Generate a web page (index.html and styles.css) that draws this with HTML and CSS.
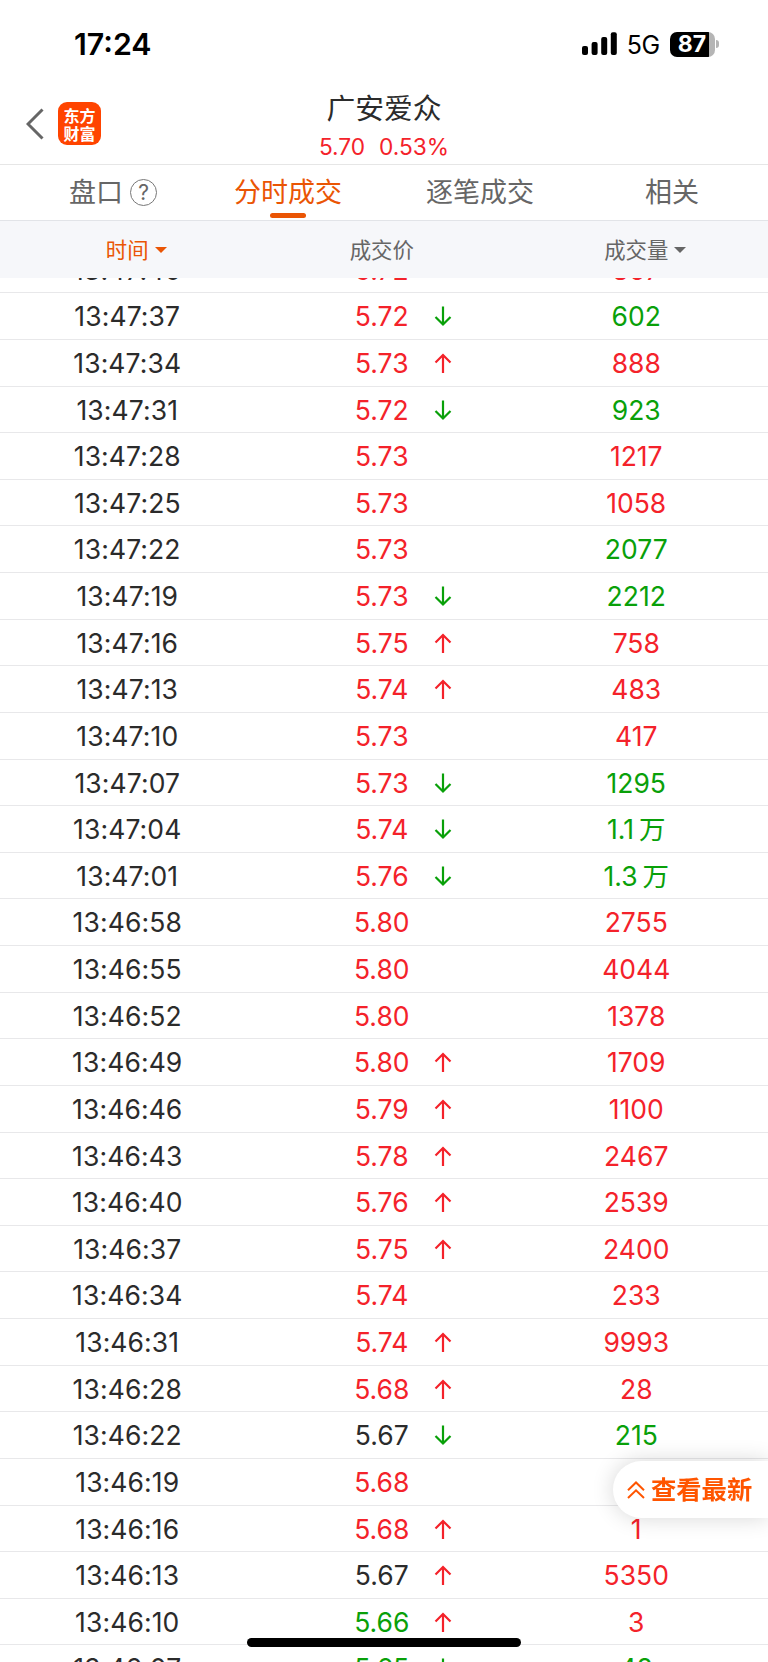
FILE: index.html
```html
<!DOCTYPE html>
<html lang="zh-CN">
<head>
  <meta charset="UTF-8" />
  <meta name="viewport" content="width=device-width, initial-scale=1.0"/>
  <title>广安爱众 - 分时成交</title>
  <link rel="stylesheet" href="styles.css">
</head>

<body>
  <div class="status-bar">
    <span class="status-time">17:24</span>
    <div class="status-icons">
      <svg class="signal" width="36" height="24" viewBox="0 0 36 24">
        <rect x="0" y="14" width="6" height="9" rx="2"/>
        <rect x="9.6" y="10" width="6" height="13" rx="2"/>
        <rect x="19.2" y="5" width="6" height="18" rx="2"/>
        <rect x="28.8" y="0.3" width="6" height="22.7" rx="2"/>
      </svg>
      <span class="network">5G</span>
      <div class="battery"><span>87</span></div>
      <div class="battery-cap"></div>
    </div>
  </div>

  <header class="header">
    <div class="header-left">
      <svg class="back" width="18" height="32" viewBox="0 0 18 32">
        <path d="M16.5 1.5 L2 16 L16.5 30.5" fill="none" stroke="#666" stroke-width="3"/>
      </svg>
      <div class="logo">东方<br>财富</div>
    </div>
    <div class="header-title">
      <h1>广安爱众</h1>
      <p><span>5.70</span><span>0.53%</span></p>
    </div>
  </header>

  <nav class="tabs">
    <a class="tab">盘口<i class="help">?</i></a>
    <a class="tab active">分时成交</a>
    <a class="tab">逐笔成交</a>
    <a class="tab">相关</a>
  </nav>

  <div class="columns">
    <span class="sorted">时间<i class="caret"></i></span>
    <span>成交价</span>
    <span>成交量<i class="caret"></i></span>
  </div>

  <main class="list">
    <div id="rows"></div>
  </main>

  <button type="button" class="latest">
    <svg width="18" height="18" viewBox="0 0 18 18">
      <path d="M1 9.2 L9 1.5 L17 9.2 M1 17 L9 9.3 L17 17" fill="none" stroke="#ff5500" stroke-width="2"/>
    </svg>
    <span>查看最新</span>
  </button>
  <div class="home-indicator"></div>

  <script>
    // hora, precio, color del precio, flecha, volumen, color del volumen
    const datos = [
      ["13:47:40", "5.72", "red", "", "867", "red"],
      ["13:47:37", "5.72", "red", "down", "602", "green"],
      ["13:47:34", "5.73", "red", "up", "888", "red"],
      ["13:47:31", "5.72", "red", "down", "923", "green"],
      ["13:47:28", "5.73", "red", "", "1217", "red"],
      ["13:47:25", "5.73", "red", "", "1058", "red"],
      ["13:47:22", "5.73", "red", "", "2077", "green"],
      ["13:47:19", "5.73", "red", "down", "2212", "green"],
      ["13:47:16", "5.75", "red", "up", "758", "red"],
      ["13:47:13", "5.74", "red", "up", "483", "red"],
      ["13:47:10", "5.73", "red", "", "417", "red"],
      ["13:47:07", "5.73", "red", "down", "1295", "green"],
      ["13:47:04", "5.74", "red", "down", "1.1万", "green"],
      ["13:47:01", "5.76", "red", "down", "1.3万", "green"],
      ["13:46:58", "5.80", "red", "", "2755", "red"],
      ["13:46:55", "5.80", "red", "", "4044", "red"],
      ["13:46:52", "5.80", "red", "", "1378", "red"],
      ["13:46:49", "5.80", "red", "up", "1709", "red"],
      ["13:46:46", "5.79", "red", "up", "1100", "red"],
      ["13:46:43", "5.78", "red", "up", "2467", "red"],
      ["13:46:40", "5.76", "red", "up", "2539", "red"],
      ["13:46:37", "5.75", "red", "up", "2400", "red"],
      ["13:46:34", "5.74", "red", "", "233", "red"],
      ["13:46:31", "5.74", "red", "up", "9993", "red"],
      ["13:46:28", "5.68", "red", "up", "28", "red"],
      ["13:46:22", "5.67", "", "down", "215", "green"],
      ["13:46:19", "5.68", "red", "", "", "red"],
      ["13:46:16", "5.68", "red", "up", "1", "red"],
      ["13:46:13", "5.67", "", "up", "5350", "red"],
      ["13:46:10", "5.66", "green", "up", "3", "red"],
      ["13:46:07", "5.65", "green", "down", "48", "green"]
    ];

    const flechas = {
      up: "M9 20 V2 M1.5 9.5 L9 2 L16.5 9.5",
      down: "M9 0.5 V18.5 M1.5 11 L9 18.5 L16.5 11"
    };

    function flecha(tipo) {
      if (!tipo) return "";
      return `<svg class="arrow ${tipo}" width="18" height="21" viewBox="0 0 18 21"><path d="${flechas[tipo]}"/></svg>`;
    }

    document.getElementById("rows").innerHTML = datos.map(([hora, precio, colorPrecio, tipo, volumen, colorVolumen]) => `
      <div class="row">
        <span class="time">${hora}</span>
        <span class="price ${colorPrecio}">${precio}${flecha(tipo)}</span>
        <span class="volume ${colorVolumen}">${volumen.replace("万", "<b>万</b>")}</span>
      </div>`).join("");
  </script>
</body>
</html>
```
FILE: styles.css
```css
* {
  box-sizing: border-box;
}

body {
  margin: 0;
  height: 1662px;
  overflow: hidden;
  display: flex;
  flex-direction: column;
  background: #fff;
  color: #2b2b2b;
  font-family: Inter, "Noto Sans CJK SC", sans-serif;
}

/* Status bar */
.status-bar {
  height: 88px;
  flex: none;
  display: flex;
  justify-content: space-between;
  align-items: center;
  padding: 0 49px 0 74px;
  color: #000;
}

.status-time {
  font-size: 30.3px;
  font-weight: 600;
}

.status-icons {
  display: flex;
  align-items: center;
}

.network {
  margin: 1px 10px 0 9px;
  font-size: 25px;
  letter-spacing: -0.6px;
}

.battery {
  width: 45px;
  height: 25px;
  border-radius: 7px;
  background: linear-gradient(to right, #000 39px, #b5b5b5 39px);
  color: #fff;
  font-size: 23px;
  font-weight: 700;
  line-height: 25px;
  text-align: center;
}

.battery-cap {
  width: 3px;
  height: 8px;
  margin-left: 1.5px;
  border-radius: 0 3px 3px 0;
  background: #b5b5b5;
}

/* Header */
.header {
  height: 77px;
  flex: none;
  display: grid;
  grid-template-columns: 200px 1fr 200px;
  border-bottom: 1px solid #e6e6e6;
}

.header-left {
  display: flex;
  align-items: center;
  gap: 14px;
  height: 71px;
  padding-left: 26px;
}

.logo {
  width: 43px;
  height: 43px;
  padding-top: 4px;
  border-radius: 9px;
  background: #ff4400;
  color: #fff;
  font-family: "Noto Sans CJK SC", sans-serif;
  font-size: 16px;
  font-weight: 700;
  line-height: 18px;
  text-align: center;
}

.header-title {
  text-align: center;
}

.header-title h1 {
  margin: 0;
  font-size: 28.8px;
  font-weight: 400;
  line-height: 42px;
}

.header-title p {
  display: flex;
  justify-content: center;
  gap: 14px;
  margin: 0;
  color: #f4222a;
  font-size: 22.7px;
  line-height: 34px;
}

/* Tabs */
.tabs {
  height: 56px;
  flex: none;
  display: grid;
  grid-template-columns: repeat(4, 1fr);
  border-bottom: 1px solid #e2e4e8;
}

.tab {
  position: relative;
  color: #666;
  font-size: 27px;
  line-height: 56px;
  text-align: center;
}

.tab.active {
  color: #ea5504;
}

.tab.active::after {
  content: "";
  position: absolute;
  left: 50%;
  bottom: 3px;
  width: 36px;
  height: 5px;
  margin-left: -18px;
  border-radius: 3px;
  background: #ea5504;
}

.help {
  position: absolute;
  left: 130px;
  top: 14px;
  width: 27px;
  height: 27px;
  border: 1.5px solid #777;
  border-radius: 50%;
  font-size: 21px;
  font-style: normal;
  line-height: 25px;
}

/* Column names */
.columns {
  height: 57px;
  flex: none;
  display: grid;
  grid-template-columns: repeat(3, 254.5px);
  background: #f6f7fa;
  color: #666;
  font-size: 21.4px;
  line-height: 58px;
  text-align: center;
}

.columns span {
  position: relative;
}

.columns .sorted {
  color: #ea5504;
}

.caret {
  position: absolute;
  top: 26px;
  margin-left: 6px;
  border: 6px solid transparent;
  border-top-color: currentColor;
  border-bottom: 0;
}

/* Trades */
.list {
  flex: 1;
  min-height: 0;
  overflow: hidden;
}

#rows {
  margin-top: -31.3px;
}

.row {
  display: grid;
  grid-template-columns: repeat(3, 254.5px);
  height: 46.64px;
  border-bottom: 1px solid #e8e8ea;
  font-size: 26.5px;
  line-height: 46px;
  text-align: center;
}

.time {
  letter-spacing: 0.1px;
}

.price {
  position: relative;
}

.red {
  color: #f4222a;
}

.green {
  color: #09a009;
}

.arrow {
  position: absolute;
  left: 179px;
  top: 13px;
  fill: none;
  stroke: #f4222a;
  stroke-width: 2.2;
}

.arrow.down {
  stroke: #09a009;
}

.volume b {
  margin-left: 5px;
  font-weight: 400;
}

/* Floating button */
.latest {
  position: fixed;
  right: 0;
  top: 1461px;
  width: 155px;
  height: 57px;
  display: flex;
  align-items: center;
  gap: 6px;
  padding: 0 0 0 14px;
  border: none;
  border-radius: 29px 0 0 29px;
  background: #fff;
  box-shadow: 0 0 22px rgba(0,0,0,0.16);
  color: #ff5500;
  font-family: "Noto Sans CJK SC", sans-serif;
  font-size: 25.3px;
  font-weight: 700;
  white-space: nowrap;
}

.latest svg {
  flex: none;
}

.latest span {
  padding-bottom: 4px;
}

.home-indicator {
  position: fixed;
  left: 247px;
  top: 1638px;
  width: 274px;
  height: 9px;
  border-radius: 5px;
  background: #000;
}
```
